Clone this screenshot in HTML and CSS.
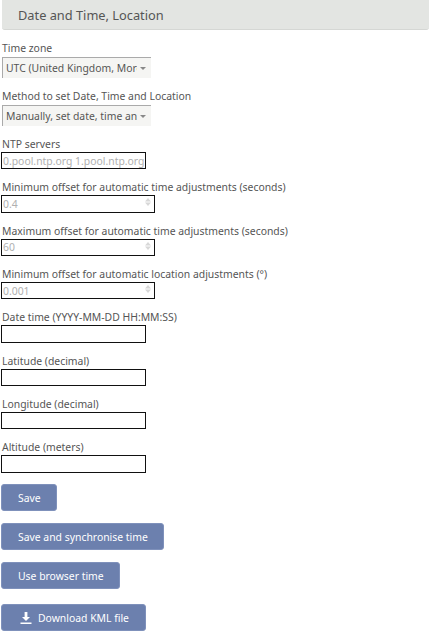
FILE: index.html
```html
<!DOCTYPE html>
<html lang="en">
<head>
    <meta charset="UTF-8">
    <meta name="viewport" content="width=device-width, initial-scale=1.0">
    <title>Date and Time, Location</title>
    <link rel="stylesheet" href="styles.css">
</head>
<body>
    <h2 class="section-title">Date and Time, Location</h2>

    <form class="settings">
        <div class="field field-select">
            <label for="timezone">Time zone</label>
            <div class="select-wrap">
                <select id="timezone">
                    <option>UTC (United Kingdom, Morocco)</option>
                </select>
            </div>
        </div>

        <div class="field field-select">
            <label for="method">Method to set Date, Time and Location</label>
            <div class="select-wrap">
                <select id="method">
                    <option>Manually, set date, time and location</option>
                </select>
            </div>
        </div>

        <div class="field">
            <label for="ntp">NTP servers</label>
            <input type="text" id="ntp" value="0.pool.ntp.org 1.pool.ntp.org" disabled>
        </div>

        <div class="field">
            <label for="min-time">Minimum offset for automatic time adjustments (seconds)</label>
            <div class="number-wrap">
                <input type="text" id="min-time" value="0.4" disabled>
                <svg class="spinner" width="6" height="8" viewBox="0 0 6 8"><path d="M3 0 6 3.5H0zM0 4.5h6L3 8z"/></svg>
            </div>
        </div>

        <div class="field">
            <label for="max-time">Maximum offset for automatic time adjustments (seconds)</label>
            <div class="number-wrap">
                <input type="text" id="max-time" value="60" disabled>
                <svg class="spinner" width="6" height="8" viewBox="0 0 6 8"><path d="M3 0 6 3.5H0zM0 4.5h6L3 8z"/></svg>
            </div>
        </div>

        <div class="field">
            <label for="min-location">Minimum offset for automatic location adjustments (°)</label>
            <div class="number-wrap">
                <input type="text" id="min-location" value="0.001" disabled>
                <svg class="spinner" width="6" height="8" viewBox="0 0 6 8"><path d="M3 0 6 3.5H0zM0 4.5h6L3 8z"/></svg>
            </div>
        </div>

        <div class="field">
            <label for="datetime">Date time (YYYY-MM-DD HH:MM:SS)</label>
            <input type="text" id="datetime">
        </div>

        <div class="field">
            <label for="latitude">Latitude (decimal)</label>
            <input type="text" id="latitude">
        </div>

        <div class="field">
            <label for="longitude">Longitude (decimal)</label>
            <input type="text" id="longitude">
        </div>

        <div class="field">
            <label for="altitude">Altitude (meters)</label>
            <input type="text" id="altitude">
        </div>

        <div class="actions">
            <button type="button" class="btn">Save</button>
            <button type="button" class="btn">Save and synchronise time</button>
            <button type="button" class="btn">Use browser time</button>
            <button type="button" class="btn btn-download">
                <svg width="12" height="12" viewBox="0 0 12 12"><path d="M4.6 0h2.8v5H10L6 9 2 5h2.6zM0.5 10.6h11V12H0.5z"/></svg>
                Download KML file
            </button>
        </div>
    </form>
</body>
</html>
```

FILE: styles.css
```css
body {
    font-family: "Noto Sans", sans-serif;
    font-size: 10.4px;
    line-height: 15px;
    margin: 0;
    padding: 0;
    background-color: #fff;
    color: #555;
}

.section-title {
    margin: 0 1px 11px 2px;
    height: 30px;
    box-sizing: border-box;
    padding-left: 16px;
    background: #e3e5e2;
    border-bottom: 1px solid #d5d7d4;
    border-radius: 0 0 3px 3px;
    font-size: 12.8px;
    font-weight: normal;
    line-height: 30px;
    color: #555;
}

.field {
    margin-bottom: 11px;
}

.field-select {
    margin-bottom: 11px;
}

label {
    display: block;
    margin-left: 2px;
}

input {
    display: block;
    box-sizing: border-box;
    width: 145px;
    height: 17.33px;
    margin-left: 1px;
    padding: 0 1px;
    border: 1px solid #111;
    background: #fff;
    font-family: inherit;
    font-size: 10.4px;
    color: #555;
}

input:disabled {
    color: #b0b0b0;
    opacity: 1;
}

.number-wrap {
    position: relative;
    width: 154px;
    margin-left: 1px;
}

.number-wrap input {
    width: 100%;
    margin-left: 0;
}

.spinner {
    position: absolute;
    top: 3px;
    right: 4px;
    fill: #d8d8d8;
}

.select-wrap {
    position: relative;
    width: 149px;
    margin: 1px 0 0 2px;
}

.select-wrap::after {
    content: "";
    position: absolute;
    top: 10px;
    right: 5px;
    border-left: 3px solid transparent;
    border-right: 3px solid transparent;
    border-top: 3px solid #888;
}

select {
    display: block;
    box-sizing: border-box;
    width: 100%;
    height: 21px;
    padding: 0 14px 0 3px;
    border: none;
    border-top: 1px solid #aaa;
    border-left: 1px solid #aaa;
    border-radius: 0;
    background: #f5f5f3;
    font-family: inherit;
    font-size: 10.4px;
    color: #555;
    appearance: none;
}

.actions {
    display: flex;
    flex-direction: column;
    align-items: flex-start;
    gap: 11.67px;
    margin: 11px 0 0 1px;
}

.btn {
    display: flex;
    align-items: center;
    height: 27.33px;
    padding: 1px 15px 0 16px;
    border: 1px solid #7f91bb;
    border-radius: 3px;
    background: #6c80ae;
    font-family: inherit;
    font-size: 10.4px;
    color: #fff;
}

.btn-download {
    gap: 6px;
    margin-top: 3px;
    padding-left: 18px;
    padding-right: 16px;
}

.btn-download svg {
    fill: #fff;
}
```
